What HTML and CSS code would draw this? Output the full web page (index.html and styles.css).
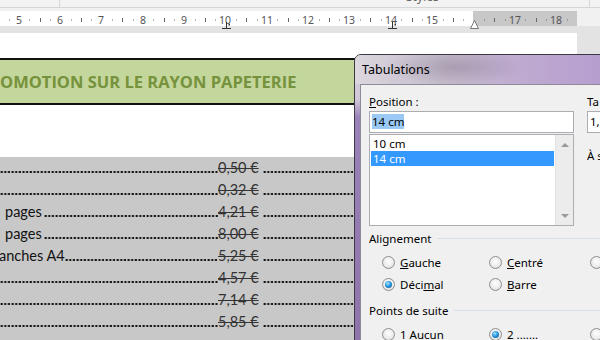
FILE: index.html
```html
<!DOCTYPE html>
<html lang="fr">
<head>
  <meta charset="UTF-8">
  <title>Tabulations</title>
  <link rel="stylesheet" href="styles.css">
</head>
<body>
  <div class="app">
    <div class="ribbon">
      <span class="sep sep-left"></span>
      <span class="styles-label">Styles</span>
      <span class="sep sep-right"></span>
    </div>

    <div class="ruler-bar">
      <svg class="ruler" width="577" height="22" viewBox="0 0 577 22">
        <rect x="0" y="0" width="473" height="15" fill="#ffffff"/>
        <rect x="473" y="0" width="104" height="15" fill="#c8c8c8"/>
        <g fill="#555" font-family="Noto Sans, sans-serif" font-size="10.5" text-anchor="middle">
          <text x="19" y="12.5">5</text>
          <text x="60" y="12.5">6</text>
          <text x="101" y="12.5">7</text>
          <text x="143" y="12.5">8</text>
          <text x="184" y="12.5">9</text>
          <text x="225" y="12.5">10</text>
          <text x="267" y="12.5">11</text>
          <text x="308" y="12.5">12</text>
          <text x="349" y="12.5">13</text>
          <text x="391" y="12.5">14</text>
          <text x="432" y="12.5">15</text>
          <text x="515" y="12.5">17</text>
          <text x="556" y="12.5">18</text>
        </g>
        <g id="ticks" fill="#666"></g>
        <!-- decimal tab stops -->
        <g stroke="#333" stroke-width="1" fill="none">
          <path d="M226.5 11 V17.5 M222 17.5 H231"/>
          <path d="M392.5 11 V17.5 M388 17.5 H397"/>
        </g>
        <rect x="228.5" y="13" width="1.5" height="1.5" fill="#333"/>
        <rect x="394.5" y="13" width="1.5" height="1.5" fill="#333"/>
        <!-- indent marker -->
        <path d="M470.5 17.5 L474.5 9.5 L478.5 17.5 Z" fill="#fff" stroke="#777"/>
      </svg>
    </div>

    <div class="workspace">
      <div class="page">
        <div class="banner">OMOTION SUR LE RAYON PAPETERIE</div>
        <div class="list">
          <div class="row"><span class="lead"><span class="dots"></span></span><s class="price">0,50 €</s><span class="dots tail"></span></div>
          <div class="row"><span class="lead"><span class="dots"></span></span><s class="price">0,32 €</s><span class="dots tail"></span></div>
          <div class="row"><span class="lead"><span class="label">pages</span><span class="dots"></span></span><s class="price">4,21 €</s><span class="dots tail"></span></div>
          <div class="row"><span class="lead"><span class="label">pages</span><span class="dots"></span></span><s class="price">8,00 €</s><span class="dots tail"></span></div>
          <div class="row"><span class="lead"><span class="label cut">anches A4</span><span class="dots"></span></span><s class="price">5,25 €</s><span class="dots tail"></span></div>
          <div class="row"><span class="lead"><span class="dots"></span></span><s class="price">4,57 €</s><span class="dots tail"></span></div>
          <div class="row"><span class="lead"><span class="dots"></span></span><s class="price">7,14 €</s><span class="dots tail"></span></div>
          <div class="row"><span class="lead"><span class="dots"></span></span><s class="price">5,85 €</s><span class="dots tail"></span></div>
        </div>
      </div>
      <div class="margin-right"></div>
    </div>

    <div class="dialog">
      <div class="dialog-title">Tabulations</div>
      <div class="dialog-body">
        <div class="top-row">
          <div class="col-left">
            <div class="field-label"><u>P</u>osition :</div>
            <div class="field"><span class="sel">14 cm</span></div>
            <div class="listbox">
              <div class="items">
                <div class="item">10 cm</div>
                <div class="item active">14 cm</div>
              </div>
              <div class="scrollbar">
                <span class="arrow up"></span>
                <span class="arrow down"></span>
              </div>
            </div>
          </div>
          <div class="col-right">
            <div class="field-label">Ta</div>
            <div class="field small">1,2</div>
            <div class="field-label note">À s</div>
          </div>
        </div>

        <div class="group-head"><span>Alignement</span><span class="rule"></span></div>
        <div class="options">
          <label class="opt"><span class="radio"></span><span><u>G</u>auche</span></label>
          <label class="opt"><span class="radio"></span><span><u>C</u>entré</span></label>
          <label class="opt"><span class="radio"></span></label>
          <label class="opt"><span class="radio on"></span><span>Déci<u>m</u>al</span></label>
          <label class="opt"><span class="radio"></span><span><u>B</u>arre</span></label>
          <span></span>
        </div>

        <div class="group-head second"><span>Points de suite</span><span class="rule"></span></div>
        <div class="options">
          <label class="opt"><span class="radio"></span><span><u>1</u> Aucun</span></label>
          <label class="opt"><span class="radio on"></span><span><u>2</u> .......</span></label>
          <label class="opt"><span class="radio"></span></label>
        </div>
      </div>
    </div>
  </div>

  <script>
    // quarter-cm dots and half-cm ticks on the ruler
    var g = document.getElementById('ticks');
    var ns = 'http://www.w3.org/2000/svg';
    for (var n = 4; n <= 18; n++) {
      var x0 = 19 + 41.33 * (n - 5);
      [0.25, 0.5, 0.75].forEach(function (f) {
        var x = x0 + 41.33 * f;
        if (x < 2 || x > 575 || Math.abs(x - 474) < 5) return;
        var r = document.createElementNS(ns, 'rect');
        r.setAttribute('x', Math.round(x));
        r.setAttribute('width', 1);
        if (f === 0.5) {
          r.setAttribute('y', 7);
          r.setAttribute('height', 4);
        } else {
          r.setAttribute('y', 8.5);
          r.setAttribute('height', 1);
        }
        g.appendChild(r);
      });
    }
  </script>
</body>
</html>
```

FILE: styles.css
```css
html, body {
  margin: 0;
  padding: 0;
}
body {
  width: 600px;
  height: 340px;
  overflow: hidden;
  background: #e3e3e3;
}
.app {
  position: relative;
  width: 600px;
  height: 340px;
  overflow: hidden;
}

/* ribbon strip */
.ribbon {
  height: 7px;
  background: #f3f3f3;
  border-bottom: 1px solid #d6d6d6;
  display: flex;
  align-items: flex-end;
  overflow: hidden;
}
.sep {
  width: 1px;
  height: 7px;
  background: #d6d6d6;
}
.sep-left {
  margin-left: 59px;
}
.styles-label {
  margin-left: 346px;
  margin-bottom: 4px;
  font: 12px/12px "Noto Sans", sans-serif;
  color: #666;
}
.sep-right {
  margin-left: 150px;
}

/* ruler */
.ruler-bar {
  height: 25px;
  background: #f1f1f1;
  padding-top: 3px;
  box-sizing: border-box;
}
.ruler {
  display: block;
  overflow: visible;
}

/* document */
.workspace {
  display: flex;
  height: 307px;
  background: #e3e3e3;
  margin-top: -7px;
  padding-top: 7px;
}
.page {
  width: 577px;
  background: #fff;
  font-family: Lato, "Open Sans", sans-serif;
  font-size: 14.5px;
  color: #111;
}
.banner {
  margin-top: 25px;
  height: 43px;
  border-top: 2px solid #111;
  border-bottom: 2px solid #111;
  background: #c3d69b;
  color: #76923c;
  font-family: "Open Sans", sans-serif;
  font-weight: bold;
  font-size: 16.5px;
  line-height: 43px;
  white-space: nowrap;
}
.list {
  margin-top: 52px;
  background: #c8c8c8;
  height: 200px;
}
.row {
  display: flex;
  height: 22px;
  line-height: 22px;
  white-space: nowrap;
}
.lead {
  width: 218px;
  display: flex;
}
.label {
  padding-left: 5px;
  padding-right: 2px;
}
.label.cut {
  padding-left: 0;
  padding-right: 0;
  margin-left: -1px;
}
.dots {
  flex: 1;
  min-width: 0;
  background-image: radial-gradient(circle at 1.5px 15px, #111 0.9px, rgba(0, 0, 0, 0) 1.3px);
  background-size: 3.65px 22px;
  background-repeat: repeat-x;
}
.price {
  color: #333;
  width: 41px;
  margin-right: 4px;
}
.tail {
  flex: 1;
}

/* dialog */
.dialog {
  position: absolute;
  left: 354px;
  top: 54px;
  width: 300px;
  height: 300px;
  border: 1px solid #3e3a44;
  border-radius: 7px 7px 0 0;
  padding-left: 5px;
  background: linear-gradient(to bottom, #d8d3dc 0, #d0c7d8 45px, #9a83b8 62px, #8c73aa 100%);
  font-family: "Noto Sans", sans-serif;
  font-size: 11.5px;
  color: #000;
  box-sizing: border-box;
}
.dialog-title {
  height: 29px;
  margin-left: -5px;
  padding-left: 7px;
  line-height: 30px;
  font-size: 12.5px;
  border-radius: 6px 6px 0 0;
  background:
    radial-gradient(ellipse 70px 18px at 100px 12px, rgba(120, 105, 130, 0.35), rgba(120, 105, 130, 0) 100%),
    linear-gradient(to right, #dcd8de 0, #d2cbd6 12%, #c5bccb 30%, #c0aed0 50%, #b9a1d0 75%, #b096cb 100%);
}
.dialog-body {
  height: 260px;
  border: 1px solid #8e8a98;
  border-right: none;
  background: #f0f0f0;
  padding: 9px 0 0 8px;
}
.top-row {
  display: flex;
  gap: 13px;
}
.col-left {
  width: 205px;
}
.col-right {
  width: 20px;
}
.field-label {
  height: 16px;
  line-height: 16px;
  white-space: nowrap;
}
.field-label.note {
  margin-top: 15px;
}
.field {
  margin-top: 1px;
  height: 22px;
  border: 1px solid #abadb3;
  background: #fff;
  box-sizing: border-box;
  padding-left: 2px;
  line-height: 20px;
  white-space: nowrap;
}
.sel {
  background: #99c9f4;
}
.listbox {
  margin-top: 1px;
  height: 92px;
  border: 1px solid #abadb3;
  background: #fff;
  box-sizing: border-box;
  display: flex;
}
.items {
  flex: 1;
  padding: 1px 1px 0 1px;
}
.item {
  height: 15px;
  line-height: 15px;
  padding-left: 2px;
}
.item.active {
  background: #3399ff;
  color: #fff;
}
.scrollbar {
  width: 17px;
  background: #ececec;
  border-left: 1px solid #e2e2e2;
  display: flex;
  flex-direction: column;
  justify-content: space-between;
  align-items: center;
  padding: 8px 0 7px;
}
.arrow {
  width: 0;
  height: 0;
  border-left: 4px solid transparent;
  border-right: 4px solid transparent;
}
.arrow.up {
  border-bottom: 4px solid #9a9a9a;
}
.arrow.down {
  border-top: 4px solid #9a9a9a;
}
.group-head {
  margin-top: 4px;
  height: 16px;
  display: flex;
  align-items: center;
  gap: 6px;
  white-space: nowrap;
}
.group-head.second {
  margin-top: 7px;
}
.rule {
  flex: 1;
  border-top: 1px solid #d9dfe6;
}
.options {
  margin-top: 5px;
  padding-left: 13px;
  display: grid;
  grid-template-columns: 107px 101px 20px;
  grid-auto-rows: 22px;
}
.opt {
  display: flex;
  align-items: center;
  gap: 5px;
  white-space: nowrap;
}
.radio {
  position: relative;
  width: 13px;
  height: 13px;
  flex: none;
  border-radius: 50%;
  border: 1px solid #8e8f8f;
  box-sizing: border-box;
  background: radial-gradient(circle at 50% 40%, #ffffff 0, #ececec 55%, #cfcfcf 100%);
}
.radio.on::after {
  content: "";
  position: absolute;
  left: 2px;
  top: 2px;
  width: 7px;
  height: 7px;
  border-radius: 50%;
  background: radial-gradient(circle at 40% 35%, #a5e6ff 0, #2b97dd 45%, #0b4d85 100%);
}
```
